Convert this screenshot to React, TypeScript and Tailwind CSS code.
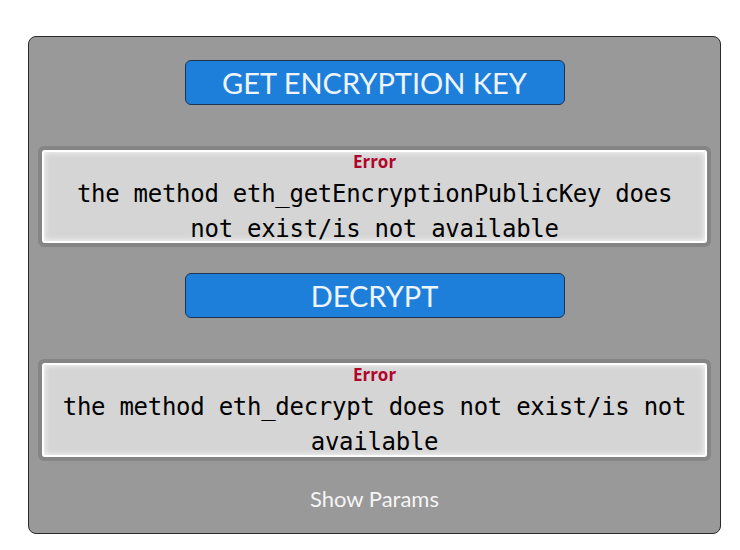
import React from "react";

const ErrorBox = ({ message, height }: { message: string; height: string }) => (
  <div className={`${height} rounded-md border-4 border-[#858585]`}>
    <div className="h-full rounded-[3px] border-2 border-white bg-[#d5d5d5] px-3 text-center shadow-[inset_0_0_6px_rgba(255,255,255,0.9)]">
      <div className="font-['Open_Sans',sans-serif] text-[17px] font-bold leading-[20px] text-[#b0062c]">
        Error
      </div>
      <div className="mt-[5px] font-['DejaVu_Sans_Mono',monospace] text-[24px] leading-[35px] tracking-[-0.28px] text-black">
        {message}
      </div>
    </div>
  </div>
);

const ActionButton = ({ label }: { label: string }) => (
  <button className="h-[45px] w-[380px] rounded-md border border-[#1d3550] bg-[#1e7fdb] font-['Lato',sans-serif] text-[29px] text-[#eef4fb]">
    {label}
  </button>
);

export default function App() {
  return (
    <div className="min-h-screen bg-white px-[28px] pt-[36px]">
      <div className="flex h-[498px] w-[693px] flex-col rounded-lg border border-[#2a2a2a] bg-[#999999] px-[9px]">
        <div className="mt-[23px] flex justify-center">
          <ActionButton label="GET ENCRYPTION KEY" />
        </div>
        <div className="mt-[41px]">
          <ErrorBox
            height="h-[101px]"
            message="the method eth_getEncryptionPublicKey does not exist/is not available"
          />
        </div>
        <div className="mt-[26px] flex justify-center">
          <ActionButton label="DECRYPT" />
        </div>
        <div className="mt-[41px]">
          <ErrorBox
            height="h-[102px]"
            message="the method eth_decrypt does not exist/is not available"
          />
        </div>
        <div className="mt-[24px] text-center font-['Lato',sans-serif] text-[22px] leading-[28px] text-[#f5f5f5]">
          Show Params
        </div>
      </div>
    </div>
  );
}
